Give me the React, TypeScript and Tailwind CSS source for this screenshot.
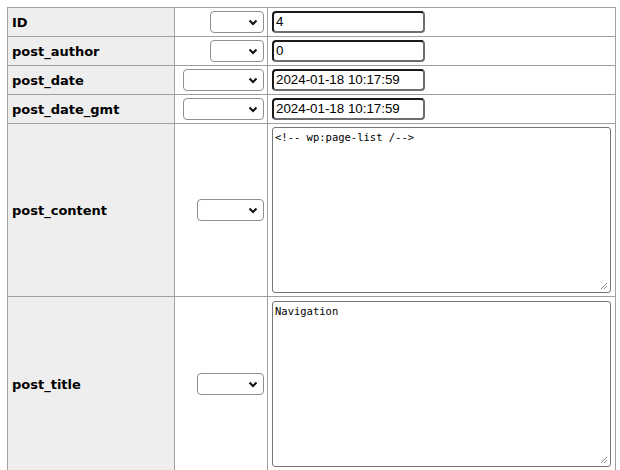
import React from "react";

type Row = {
  name: string;
  value: string;
  kind: "input" | "textarea";
  selectW: string;
  last?: boolean;
};

const rows: Row[] = [
  { name: "ID", value: "4", kind: "input", selectW: "w-[54px]" },
  { name: "post_author", value: "0", kind: "input", selectW: "w-[54px]" },
  { name: "post_date", value: "2024-01-18 10:17:59", kind: "input", selectW: "w-[81px]" },
  { name: "post_date_gmt", value: "2024-01-18 10:17:59", kind: "input", selectW: "w-[81px]" },
  { name: "post_content", value: "<!-- wp:page-list /-->", kind: "textarea", selectW: "w-[67px]" },
  { name: "post_title", value: "Navigation", kind: "textarea", selectW: "w-[67px]", last: true },
];

const Chevron = () => (
  <svg width="10" height="7" viewBox="0 0 10 7" className="mr-[5px]">
    <path d="M1.5 1.5 L5 5 L8.5 1.5" fill="none" stroke="#111" strokeWidth="2" />
  </svg>
);

const FakeSelect = ({ width }: { width: string }) => (
  <div
    className={`${width} h-[22px] ml-auto flex items-center justify-end rounded-[4px] border border-[#8f8f8f] bg-white`}
  >
    <Chevron />
  </div>
);

export default function App() {
  return (
    <div className="h-[470px] overflow-hidden p-[7px] bg-white font-['Liberation_Sans',Arial,sans-serif]">
      <table className="border-collapse w-[609px]">
        <tbody>
          {rows.map((r) => (
            <tr
              key={r.name}
              className={r.kind === "input" ? "h-[29px]" : r.last ? "h-[175px]" : "h-[173px]"}
            >
              <td className="border border-[#a0a0a0] bg-[#eeeeee] w-[167px] pl-[4px] pt-[1px] align-middle font-['DejaVu_Sans',Verdana,sans-serif] font-bold text-[13px] text-black">
                {r.name}
              </td>
              <td className="border border-[#a0a0a0] w-[93px] pr-[3px] align-middle">
                <FakeSelect width={r.selectW} />
              </td>
              <td
                className={`border border-[#a0a0a0] pl-[4px] pr-[4px] ${
                  r.last ? "pt-[4px] align-top" : "py-[3px] align-middle"
                }`}
              >
                {r.kind === "input" ? (
                  <div className="w-[153px] h-[22px] flex items-center rounded-[4px] border-2 border-t-[#1a1a1a] border-l-[#1a1a1a] border-r-[#6e6e6e] border-b-[#6e6e6e] bg-white pl-[2px] text-[13.33px] text-black leading-none">
                    {r.value}
                  </div>
                ) : (
                  <div className="relative w-[339px] h-[166px] rounded-[3px] border border-[#767676] bg-white px-[2px] pt-[3px] font-['DejaVu_Sans_Mono',monospace] text-[10.5px] leading-[13px] text-black whitespace-pre">
                    {r.value}
                    <svg width="8" height="8" viewBox="0 0 8 8" className="absolute right-[2px] bottom-[2px]">
                      <path d="M7 1 L1 7 M7 4 L4 7" stroke="#888" strokeWidth="1" />
                    </svg>
                  </div>
                )}
              </td>
            </tr>
          ))}
        </tbody>
      </table>
    </div>
  );
}
